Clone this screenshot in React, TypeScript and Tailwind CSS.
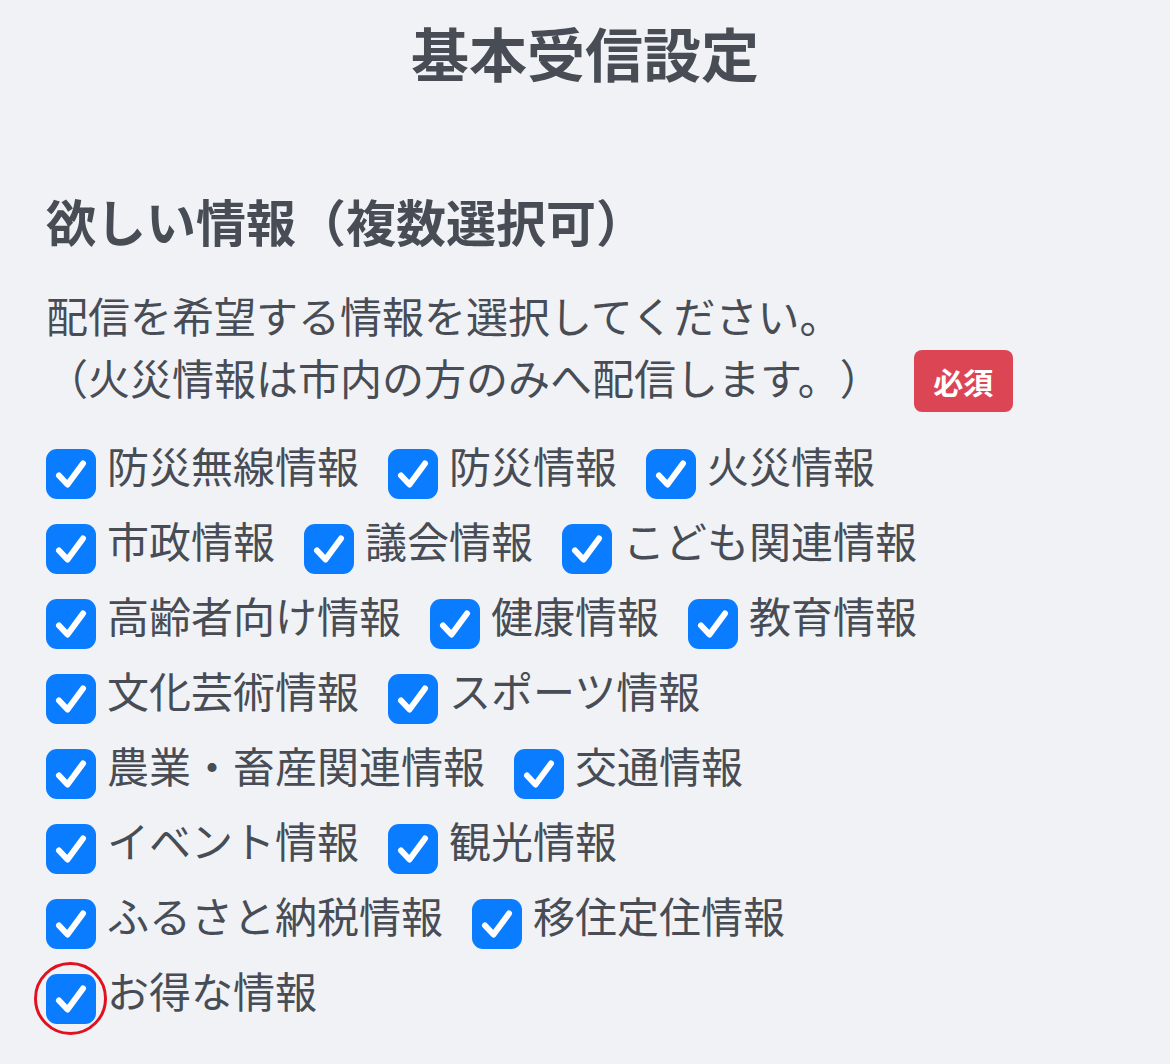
import React from 'react';

const rows: string[][] = [
  ['防災無線情報', '防災情報', '火災情報'],
  ['市政情報', '議会情報', 'こども関連情報'],
  ['高齢者向け情報', '健康情報', '教育情報'],
  ['文化芸術情報', 'スポーツ情報'],
  ['農業・畜産関連情報', '交通情報'],
  ['イベント情報', '観光情報'],
  ['ふるさと納税情報', '移住定住情報'],
  ['お得な情報'],
];

const CheckBox: React.FC<{ marked?: boolean }> = ({ marked }) => (
  <span className="relative mt-[18px] inline-flex h-[50px] w-[50px] shrink-0 items-center justify-center rounded-[11px] bg-[#0a7cff]">
    <svg width="50" height="50" viewBox="0 0 50 50" fill="none">
      <path
        d="M13 26.5 L21.5 35.5 L37 14.5"
        stroke="#ffffff"
        strokeWidth="6"
        strokeLinecap="round"
        strokeLinejoin="round"
      />
    </svg>
    {marked && (
      <span className="absolute -left-[12px] -top-[12px] h-[73px] w-[73px] rounded-full border-[3px] border-[#e0121f]" />
    )}
  </span>
);

export default function App() {
  return (
    <div
      className="min-h-[1064px] w-[1170px] bg-[#f0f2f5] text-[#474c55] [text-spacing-trim:space-all]"
      style={{ fontFamily: '"Noto Sans CJK JP", "Noto Sans", sans-serif' }}
    >
      {/* Page title */}
      <h1 className="pt-[23px] text-center text-[58px] font-bold leading-[58px]">
        基本受信設定
      </h1>

      <div className="pl-[46px]">
        {/* Section heading */}
        <h2 className="mt-[114px] text-[50px] font-bold leading-[50px]">
          欲しい情報（複数選択可）
        </h2>

        {/* Description */}
        <div className="mt-[39px] text-[42px] leading-[62px]">
          <p>配信を希望する情報を選択してください。</p>
          <div className="flex h-[62px] items-start">
            <span>（火災情報は市内の方のみへ配信します。）</span>
            <span className="ml-[32px] mt-[4px] inline-flex h-[62px] w-[99px] shrink-0 items-center justify-center rounded-[8px] bg-[#dc4654] text-[30px] font-bold leading-none text-white">
              必須
            </span>
          </div>
        </div>

        {/* Checkbox list */}
        <div className="mt-[19px] text-[42px]">
          {rows.map((row, i) => (
            <div key={i} className="flex h-[75px] items-center">
              {row.map((label, j) => (
                <label key={label} className={`flex items-center ${j < row.length - 1 ? 'mr-[29px]' : ''}`}>
                  <CheckBox marked={i === rows.length - 1} />
                  <span className="ml-[11px] leading-[75px]">{label}</span>
                </label>
              ))}
            </div>
          ))}
        </div>
      </div>
    </div>
  );
}
